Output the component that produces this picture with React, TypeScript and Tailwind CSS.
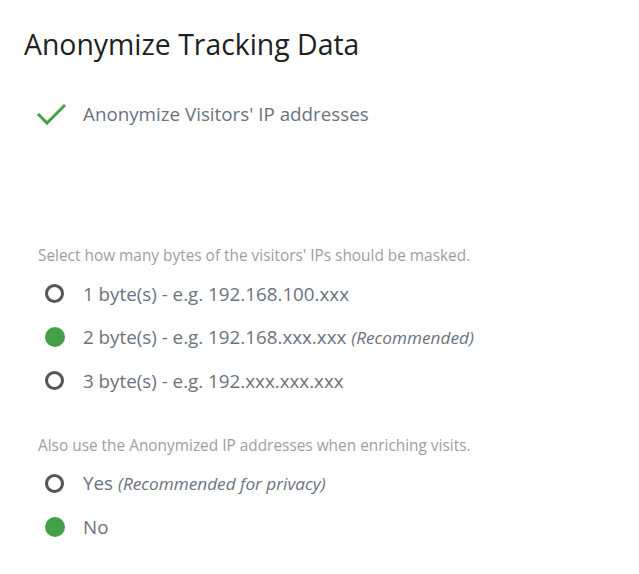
import React from 'react';

type Option = { label: string; note?: string; checked: boolean };

const byteOptions: Option[] = [
  { label: '1 byte(s) - e.g. 192.168.100.xxx', checked: false },
  { label: '2 byte(s) - e.g. 192.168.xxx.xxx', note: '(Recommended)', checked: true },
  { label: '3 byte(s) - e.g. 192.xxx.xxx.xxx', checked: false },
];

const enrichOptions: Option[] = [
  { label: 'Yes', note: '(Recommended for privacy)', checked: false },
  { label: 'No', checked: true },
];

const Radio = ({ checked }: { checked: boolean }) =>
  checked ? (
    <span className="block w-[20px] h-[20px] rounded-full bg-[#43a047]" />
  ) : (
    <span className="block w-[19px] h-[19px] rounded-full border-[3px] border-[#555555]" />
  );

const RadioGroup = ({ options }: { options: Option[] }) => (
  <div className="flex flex-col">
    {options.map((o) => (
      <label key={o.label} className="flex items-center h-[43.5px] pl-[21px]">
        <span className="w-[38px] flex items-center">
          <Radio checked={o.checked} />
        </span>
        <span className="text-[18.8px] text-[#6b7280]">
          {o.label}
          {o.note && <i className="text-[17.2px] ml-[5px]">{o.note}</i>}
        </span>
      </label>
    ))}
  </div>
);

export default function App() {
  return (
    <div className="w-[639px] h-[574px] bg-white pl-[24px] pt-[24px] font-['Open_Sans',sans-serif]">
      <h2 className="text-[28.4px] text-[#212121] leading-[40px]">Anonymize Tracking Data</h2>

      <div className="flex items-center mt-[36px] pl-[12px] h-[28px]">
        <svg width="31" height="22" viewBox="0 0 31 22" className="mr-[16px]">
          <path d="M2 11 L11 20 L29 2" fill="none" stroke="#43a047" strokeWidth="3" />
        </svg>
        <span className="text-[18.8px] text-[#6b7280]">Anonymize Visitors' IP addresses</span>
      </div>

      <div className="mt-[116px] pl-[14px]">
        <p className="text-[15.4px] text-[#9e9e9e] leading-[24px]">
          Select how many bytes of the visitors' IPs should be masked.
        </p>
      </div>
      <div className="mt-[4px]">
        <RadioGroup options={byteOptions} />
      </div>

      <div className="mt-[31px] pl-[14px]">
        <p className="text-[15.4px] text-[#9e9e9e] leading-[24px]">
          Also use the Anonymized IP addresses when enriching visits.
        </p>
      </div>
      <div className="mt-[4px]">
        <RadioGroup options={enrichOptions} />
      </div>
    </div>
  );
}
